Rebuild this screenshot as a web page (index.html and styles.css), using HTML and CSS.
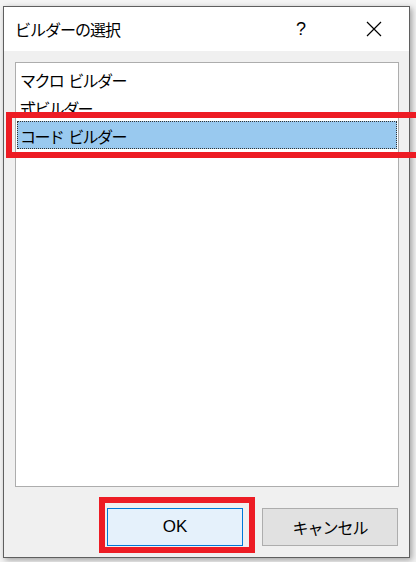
FILE: index.html
```html
<!DOCTYPE html>
<html lang="ja">
  <head>
    <meta charset="UTF-8" />
    <meta name="viewport" content="width=device-width, initial-scale=1.0" />
    <title>ビルダーの選択</title>
    <link rel="stylesheet" href="styles.css">
  </head>
  <body>
    <div class="backdrop">
      <div class="dialog">
        <div class="titlebar">
          <div class="title">ビルダーの選択</div>
          <div class="help">?</div>
          <div class="close">
            <svg width="18" height="18" viewBox="0 0 18 18">
              <path d="M2 2 L16 16 M16 2 L2 16" stroke="#000" stroke-width="1.2" fill="none" />
            </svg>
          </div>
        </div>
        <div class="body">
          <ul class="listbox">
            <li>マクロ ビルダー</li>
            <li>式ビルダー</li>
            <li class="selected">コード ビルダー</li>
          </ul>
          <div class="buttons">
            <button class="btn default">OK</button>
            <button class="btn">キャンセル</button>
          </div>
        </div>
      </div>

      <!-- annotation boxes -->
      <div class="mark mark-row"></div>
      <div class="mark mark-ok"></div>
    </div>
  </body>
</html>
```

FILE: styles.css
```css
* {
  margin: 0;
  padding: 0;
  box-sizing: border-box;
  font-family: "Noto Sans CJK JP", "Noto Sans", sans-serif;
}
body,
html {
  width: 416px;
  height: 562px;
  overflow: hidden;
}

/* WINDOW BEHIND */
.backdrop {
  position: relative;
  width: 416px;
  height: 562px;
  background: #f4f4f4;
  padding: 6px 0 0 3px;
}

/* DIALOG */
.dialog {
  width: 407px;
  height: 552px;
  border: 1px solid #5f5f5f;
  background: #f0f0f0;
  box-shadow: 2px 2px 6px rgba(0, 0, 0, 0.35);
  display: flex;
  flex-direction: column;
}
.titlebar {
  height: 44px;
  background: #fff;
  display: flex;
  align-items: center;
}
.title {
  flex: 1;
  padding-left: 11px;
  font-size: 16px;
  letter-spacing: -1px;
  color: #000;
}
.help {
  width: 20px;
  margin-right: 54px;
  font-family: "Liberation Sans", sans-serif;
  font-size: 18px;
  color: #000;
  text-align: center;
}
.close {
  width: 18px;
  height: 18px;
  margin-right: 26px;
}
.close svg {
  display: block;
}

.body {
  flex: 1;
  padding: 11px 10px 11px 11px;
  display: flex;
  flex-direction: column;
}
.listbox {
  list-style: none;
  height: 425px;
  background: #fff;
  border: 1px solid #adadad;
  padding: 2px 1px;
}
.listbox li {
  height: 28px;
  line-height: 28px;
  padding-left: 2px;
  font-size: 16px;
  letter-spacing: -1.6px;
  word-spacing: 3px;
  color: #000;
  border: 1px dotted transparent;
}
.listbox li.selected {
  background: #99c9ef;
  border-color: #333;
}

.buttons {
  display: flex;
  justify-content: flex-end;
  gap: 19px;
  margin-top: 21px;
  padding-right: 1px;
}
.btn {
  width: 136px;
  height: 38px;
  background: #e1e1e1;
  border: 1px solid #adadad;
  font-size: 16px;
  letter-spacing: -1px;
  color: #000;
}
.btn.default {
  background: #e5f1fb;
  border-color: #0078d7;
  font-family: "Liberation Sans", sans-serif;
  letter-spacing: 0;
  font-size: 17px;
}

/* RED MARKERS */
.mark {
  position: absolute;
  border: 6px solid #ed1c24;
}
.mark-row {
  left: 6px;
  top: 112px;
  width: 420px;
  height: 46px;
  border-width: 6px 0 6px 6px;
}
.mark-ok {
  left: 99px;
  top: 497px;
  width: 156px;
  height: 56px;
}
```
